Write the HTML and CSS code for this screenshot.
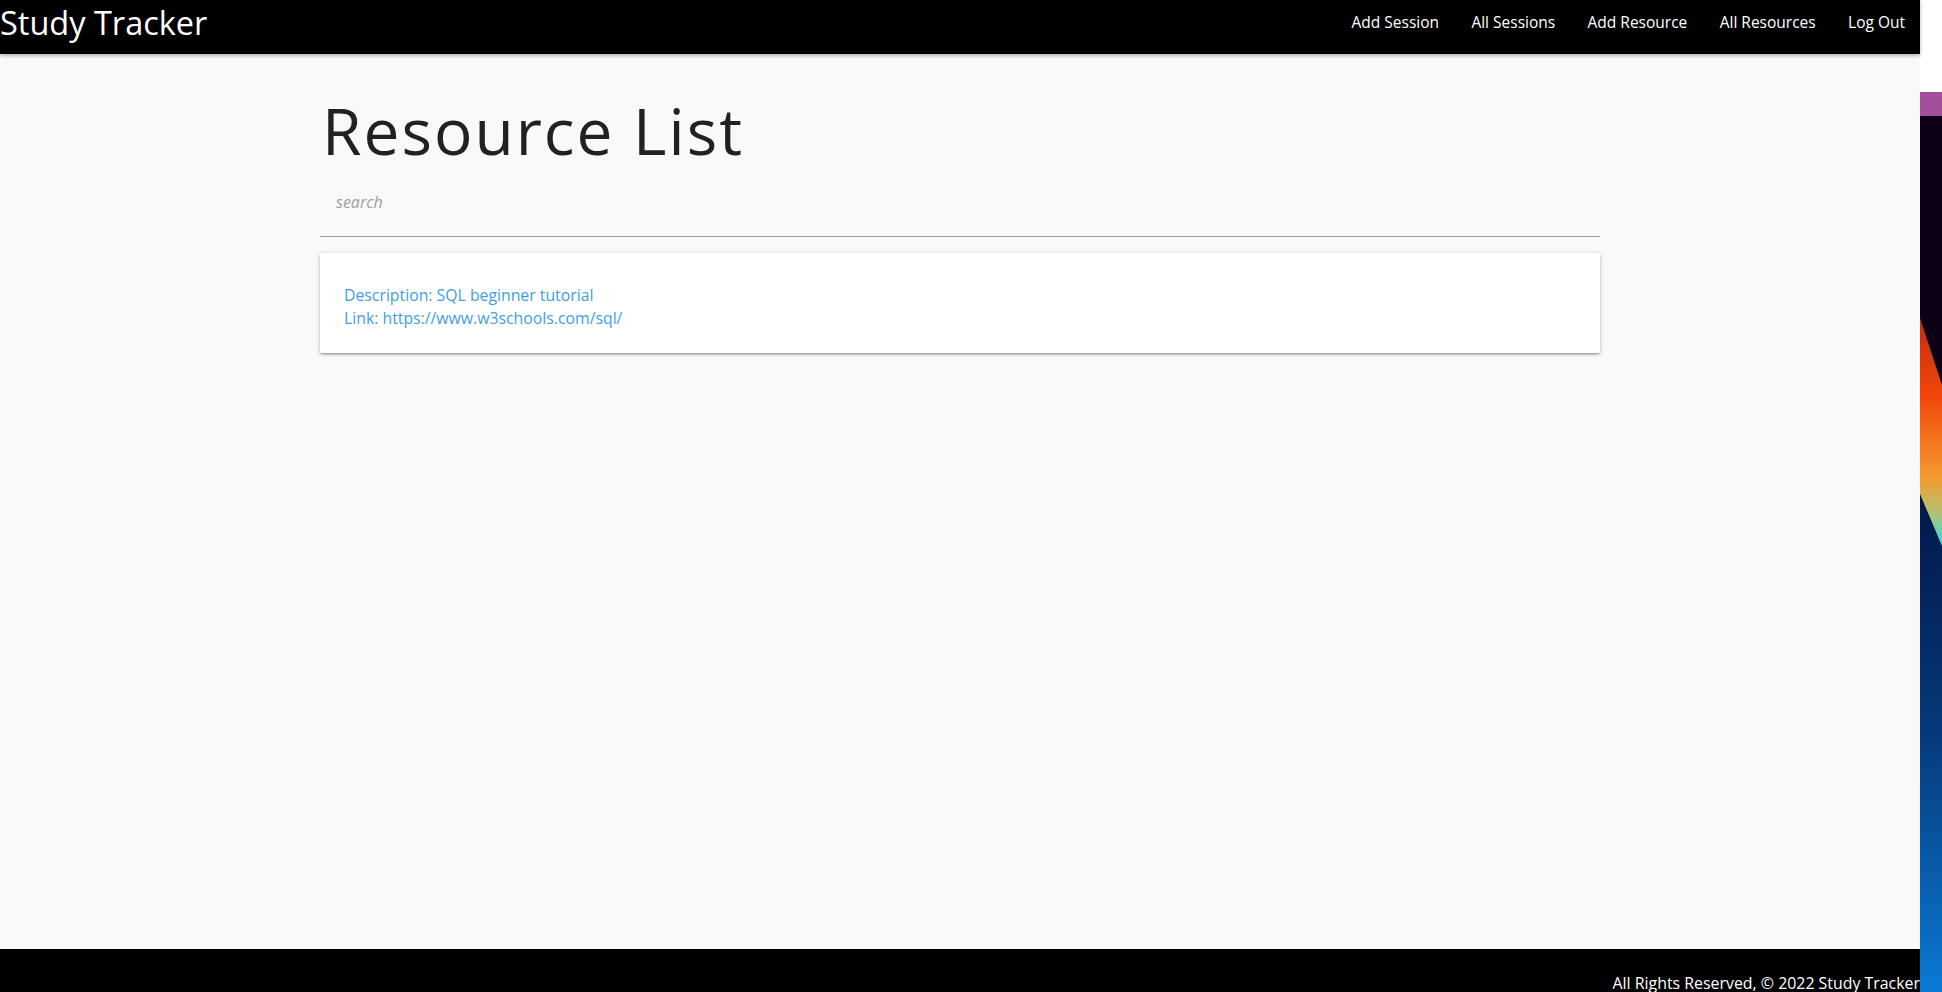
FILE: index.html
```html
<!DOCTYPE html>
<html lang="en">
<head>
<meta charset="utf-8">
<title>Study Tracker</title>
<link rel="stylesheet" href="styles.css">
</head>
<body>
<div class="page">
  <nav class="navbar">
    <a class="brand" href="#">Study Tracker</a>
    <ul class="nav-links">
      <li><a href="#">Add Session</a></li>
      <li><a href="#">All Sessions</a></li>
      <li><a href="#">Add Resource</a></li>
      <li><a href="#">All Resources</a></li>
      <li><a href="#">Log Out</a></li>
    </ul>
  </nav>
  <main class="content">
    <div class="container">
      <h1 class="title">Resource List</h1>
      <div class="search-field">
        <input class="search-input" type="text" placeholder="search">
      </div>
      <div class="card">
        <p class="card-line">Description: SQL beginner tutorial</p>
        <p class="card-line">Link: https://www.w3schools.com/sql/</p>
      </div>
    </div>
  </main>
  <footer class="footer">
    <p class="footer-text">All Rights Reserved, © 2022 Study Tracker</p>
  </footer>
</div>
<div class="wallpaper">
  <svg class="wallpaper-art" viewBox="0 0 22 992" preserveAspectRatio="none" width="22" height="992">
    <defs>
      <linearGradient id="navy" x1="0" y1="0" x2="0" y2="1">
        <stop offset="0" stop-color="#041445"/>
        <stop offset="0.5" stop-color="#063a7c"/>
        <stop offset="1" stop-color="#0a7ad4"/>
      </linearGradient>
      <linearGradient id="streak" x1="0" y1="0" x2="0" y2="1">
        <stop offset="0" stop-color="#c42a10"/>
        <stop offset="0.35" stop-color="#f2480c"/>
        <stop offset="0.7" stop-color="#f59a30"/>
        <stop offset="0.85" stop-color="#b8c070"/>
        <stop offset="1" stop-color="#2de0e0"/>
      </linearGradient>
    </defs>
    <rect x="0" y="0" width="22" height="92" fill="#ffffff"/>
    <rect x="0" y="92" width="22" height="24" fill="#a34f9c"/>
    <rect x="0" y="116" width="22" height="876" fill="#0c0017"/>
    <rect x="0" y="480" width="22" height="512" fill="url(#navy)"/>
    <polygon points="0,318 22,385 22,546 0,494" fill="url(#streak)"/>
  </svg>
</div>
</body>
</html>
```

FILE: styles.css
```css
* {
  box-sizing: border-box;
}

html, body {
  margin: 0;
  padding: 0;
}

body {
  display: flex;
  width: 1942px;
  height: 992px;
  overflow: hidden;
  font-family: "Open Sans", "Liberation Sans", sans-serif;
  background: #f9f9f9;
}

.page {
  width: 1920px;
  flex: none;
  display: flex;
  flex-direction: column;
  height: 1010px;
  background: #f9f9f9;
}

.navbar {
  height: 54px;
  flex: none;
  background: #000;
  display: flex;
  align-items: center;
  justify-content: space-between;
  box-shadow: 0 2px 3px rgba(0, 0, 0, 0.2), 0 1px 5px rgba(0, 0, 0, 0.12);
  position: relative;
  z-index: 2;
}

.brand {
  color: #fff;
  text-decoration: none;
  font-size: 32.5px;
  line-height: 44px;
  margin-top: -9px;
}

.nav-links {
  list-style: none;
  display: flex;
  margin: 0;
  padding: 0;
}

.nav-links a {
  display: block;
  color: #fff;
  text-decoration: none;
  font-size: 15.5px;
  padding: 0 16.2px;
  line-height: 44px;
  margin-top: -10px;
}

.nav-links li:last-child a {
  padding-right: 15px;
}

.content {
  flex: 1;
}

.container {
  width: 1280px;
  margin: 0 auto;
}

.title {
  margin: 0;
  padding-top: 32px;
  padding-left: 2px;
  font-size: 64px;
  font-weight: 400;
  line-height: 90px;
  color: #212121;
  letter-spacing: 2px;
}

.search-field {
  margin-top: 4px;
}

.search-input {
  display: block;
  width: 100%;
  height: 57px;
  border: none;
  border-bottom: 1px solid #9e9e9e;
  background: transparent;
  padding: 0 16px 12px;
  font-family: inherit;
  font-size: 16px;
  color: #333;
  outline: none;
}

.search-input::placeholder {
  font-style: italic;
  color: #9e9e9e;
}

.card {
  margin-top: 16px;
  background: #fff;
  border-radius: 2px;
  box-shadow: 0 2px 2px 0 rgba(0, 0, 0, 0.14), 0 3px 1px -2px rgba(0, 0, 0, 0.12), 0 1px 5px 0 rgba(0, 0, 0, 0.2);
  padding: 31px 24px 24px;
}

.card-line {
  margin: 0;
  font-size: 15.8px;
  line-height: 22.5px;
  color: #3f9ee8;
}

.footer {
  flex: none;
  height: 61px;
  background: #000;
  display: flex;
  justify-content: flex-end;
  align-items: flex-end;
}

.footer-text {
  margin: 0 0 17px;
  color: #fff;
  font-size: 15.9px;
  line-height: 20px;
}

.wallpaper {
  flex: 1;
  height: 992px;
}

.wallpaper-art {
  display: block;
}
```
